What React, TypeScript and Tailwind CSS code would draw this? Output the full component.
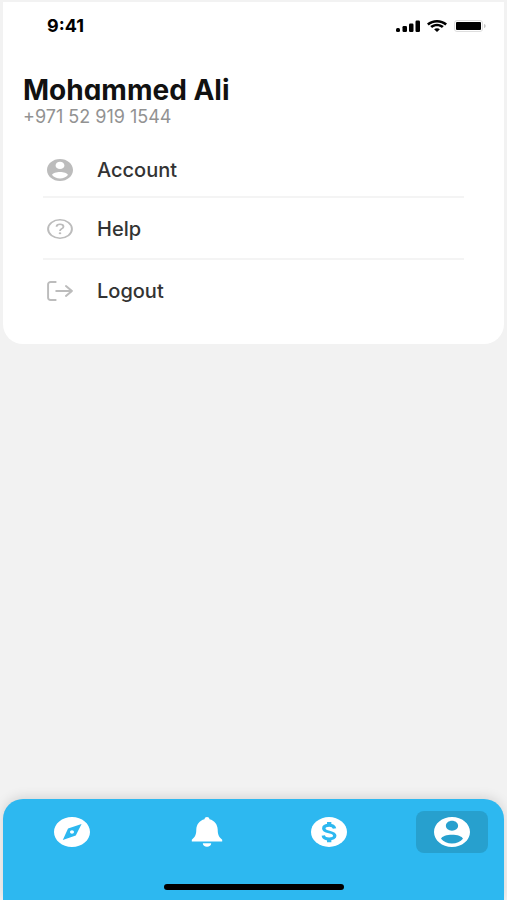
import type { ReactNode } from "react";

// ============================================================================
// Icons
// ============================================================================

const ACCOUNT_CIRCLE =
  "M12 2C6.48 2 2 6.48 2 12s4.48 10 10 10 10-4.48 10-10S17.52 2 12 2zm0 2.5c1.9 0 3.4 1.5 3.4 3.3s-1.5 3.300-3.4 3.300-3.400-1.500-3.400-3.300 1.500-3.300 3.400-3.300zm0 15.200c-2.500 0-4.700-1.200-6.100-3.200.4-1.700 3.300-2.700 6.100-2.700s5.700 1 6.100 2.700c-1.400 2-3.600 3.200-6.100 3.200z";

interface GlyphProps {
  className: string;
  viewBox: string;
  children: ReactNode;
}

/** Stretches its drawing to whatever box the class names give it. */
function Glyph({ className, viewBox, children }: GlyphProps) {
  return (
    <svg className={className} viewBox={viewBox} preserveAspectRatio="none" fill="currentColor" aria-hidden="true">
      {children}
    </svg>
  );
}

function SignalIcon() {
  return (
    <Glyph className="h-3 w-6" viewBox="0 0 24 12">
      <rect x="0" y="8" width="4" height="4" rx="1.5" />
      <rect x="6.5" y="6" width="4.5" height="6" rx="1.2" />
      <rect x="13" y="3.5" width="4.5" height="8.5" rx="1.2" />
      <rect x="19.5" y="0.5" width="4.5" height="11.5" rx="1.2" />
    </Glyph>
  );
}

function WifiIcon() {
  return (
    <Glyph className="h-3 w-5" viewBox="0 0 20 12">
      <path d="M10 0C6.2 0 2.7 1.3 0 3.5l1.7 1.9C4 3.5 6.9 2.5 10 2.5s6 1 8.3 2.9L20 3.5C17.3 1.3 13.8 0 10 0z" />
      <path d="M10 3.7C7.4 3.7 5 4.6 3.2 6.1l1.9 1.9C6.4 6.9 8.1 6.3 10 6.3s3.6.6 4.9 1.7l1.9-1.9C15 4.6 12.6 3.7 10 3.7z" />
      <path d="M10 8.2c-1.1 0-2.1.4-2.9 1.1L10 12l2.9-2.7c-.8-.7-1.8-1.1-2.9-1.1z" />
    </Glyph>
  );
}

function BatteryIcon() {
  return (
    <Glyph className="h-3 w-8" viewBox="0 0 32 12">
      <rect x="0.5" y="0.5" width="28" height="11" rx="2.5" fill="none" stroke="#dedede" />
      <rect x="2" y="2" width="25" height="8" rx="1" />
      <path d="M30 4c1.2.3 1.7 1 1.7 2s-.5 1.7-1.7 2z" fill="#c8c8c8" />
    </Glyph>
  );
}

function HelpIcon() {
  return (
    <Glyph className="h-5 w-[26px]" viewBox="0 0 24 24">
      <circle cx="12" cy="12" r="11" fill="none" stroke="currentColor" strokeWidth="1.8" />
      <path
        d="M8.8 9.4c.1-1.9 1.4-3.1 3.2-3.1 1.9 0 3.2 1.2 3.2 2.9 0 1.3-.7 2-1.8 2.7-1 .7-1.4 1.2-1.4 2.4"
        fill="none"
        stroke="currentColor"
        strokeWidth="1.7"
      />
      <circle cx="12" cy="17.2" r="1.2" />
    </Glyph>
  );
}

function LogoutIcon() {
  return (
    <Glyph className="h-5 w-[26px]" viewBox="0 0 24 20">
      <g fill="none" stroke="currentColor" strokeWidth="1.8" strokeLinecap="round" strokeLinejoin="round">
        <path d="M8 1H3.5C2 1 1 1.9 1 3.2v13.6C1 18.1 2 19 3.5 19H8" />
        <path d="M8.5 10H23M17.5 5L23 10l-5.5 5" />
      </g>
    </Glyph>
  );
}

function CompassIcon() {
  return (
    <Glyph className="h-[30px] w-9" viewBox="2 2 20 20">
      <path d="M12 10.9c-.61 0-1.1.49-1.1 1.1s.49 1.1 1.1 1.1 1.1-.49 1.1-1.1-.49-1.1-1.1-1.1zM12 2C6.48 2 2 6.48 2 12s4.48 10 10 10 10-4.48 10-10S17.52 2 12 2zm2.1 12.3L6.9 17.3l2.9-7.7L17.3 6.6l-3.2 7.7z" />
    </Glyph>
  );
}

function BellIcon() {
  return (
    <Glyph className="h-[30px] w-8" viewBox="0 0 32 30">
      <path d="M16 0c-1.4 0-2.3.9-2.5 2.3C8.4 3.6 5.6 7.4 5.3 12.5 5.2 17.5 4.5 19.5.8 22.7v1.8h30.4v-1.8c-3.7-3.2-4.4-5.2-4.5-10.2-.3-5.1-3.1-8.9-8.2-10.2C18.3.9 17.4 0 16 0z" />
      <path d="M11.8 26.3h8.4c0 2-1.8 3.5-4.2 3.5s-4.2-1.5-4.2-3.5z" />
    </Glyph>
  );
}

function DollarIcon() {
  return (
    <Glyph className="h-[30px] w-9" viewBox="2 2 20 20">
      <circle cx="12" cy="12" r="10" />
      <g fill="none" stroke="#2db8f0" strokeWidth="1.9">
        <path d="M15.1 9.7C14.8 8.3 13.7 7.5 12.1 7.5c-1.8 0-3 .8-3 2.1 0 1.4 1.2 1.9 3 2.4s3.1 1 3.1 2.5c0 1.3-1.3 2.1-3.1 2.1-1.9 0-3.1-.8-3.3-2.3" />
        <path d="M12.1 5.3v2.400M12.1 16.400v2.400" strokeWidth="2.4" />
      </g>
    </Glyph>
  );
}

// ============================================================================
// Menu and tabs
// ============================================================================

const MENU_ITEMS = [
  {
    label: "Account",
    icon: (
      <Glyph className="h-[22px] w-[26px]" viewBox="2 2 20 20">
        <path d={ACCOUNT_CIRCLE} />
      </Glyph>
    ),
    row: "h-[52px]",
  },
  { label: "Help", icon: <HelpIcon />, row: "h-[60px] pt-[2px]" },
  { label: "Logout", icon: <LogoutIcon />, row: "h-[60px] pt-[2px]" },
];

const TABS = [
  { label: "Explore", icon: <CompassIcon />, className: "mr-3" },
  { label: "Notifications", icon: <BellIcon />, className: "" },
  { label: "Payments", icon: <DollarIcon />, className: "" },
  {
    label: "Profile",
    icon: (
      <Glyph className="h-[30px] w-9" viewBox="2 2 20 20">
        <path d={ACCOUNT_CIRCLE} />
      </Glyph>
    ),
    className: "bg-[#27a0ce]",
    active: true,
  },
];

function StatusBar() {
  return (
    <div className="flex h-12 items-center justify-between pr-[18px] pl-11 text-black">
      <span className="text-lg font-bold">9:41</span>
      <div className="flex items-center gap-[7px]">
        <SignalIcon />
        <WifiIcon />
        <BatteryIcon />
      </div>
    </div>
  );
}

function TabBar() {
  return (
    <nav className="mt-auto rounded-t-[20px] bg-[#2db8f0] pt-3 pb-[10px] shadow-[0_-2px_12px_rgba(0,0,0,0.12)]">
      <div className="flex justify-between pr-4 pl-[33px]">
        {TABS.map((tab) => (
          <button
            key={tab.label}
            type="button"
            aria-label={tab.label}
            aria-current={tab.active ? "page" : undefined}
            className={`flex h-[42px] w-[72px] items-center justify-center rounded-lg text-white ${tab.className}`}
          >
            {tab.icon}
          </button>
        ))}
      </div>
      <div className="mx-auto mt-[31px] h-[6px] w-[180px] rounded-full bg-black" />
    </nav>
  );
}

export default function App() {
  return (
    <div className="flex min-h-screen flex-col bg-[#f2f2f2] px-[3px] pt-[2px] font-['Inter','Liberation_Sans',sans-serif] [font-feature-settings:'cv11']">
      <main className="rounded-b-[20px] bg-white pb-6">
        <StatusBar />
        <header className="px-5 pt-6">
          <h1 className="text-[28px] leading-8 font-bold text-[#111111]">Mohammed Ali</h1>
          <p className="text-lg leading-[22px] text-[#929292]">+971 52 919 1544</p>
        </header>
        <ul className="mx-10 pt-4">
          {MENU_ITEMS.map((item) => (
            <li key={item.label} className="border-b-2 border-[#f4f4f4] last:border-b-0">
              <button type="button" className={`flex w-full items-center text-left ${item.row}`}>
                <span className="flex w-[54px] pl-1 text-[#bcbcbc]">{item.icon}</span>
                <span className="text-xl font-medium text-[#333333]">{item.label}</span>
              </button>
            </li>
          ))}
        </ul>
      </main>
      <TabBar />
    </div>
  );
}
